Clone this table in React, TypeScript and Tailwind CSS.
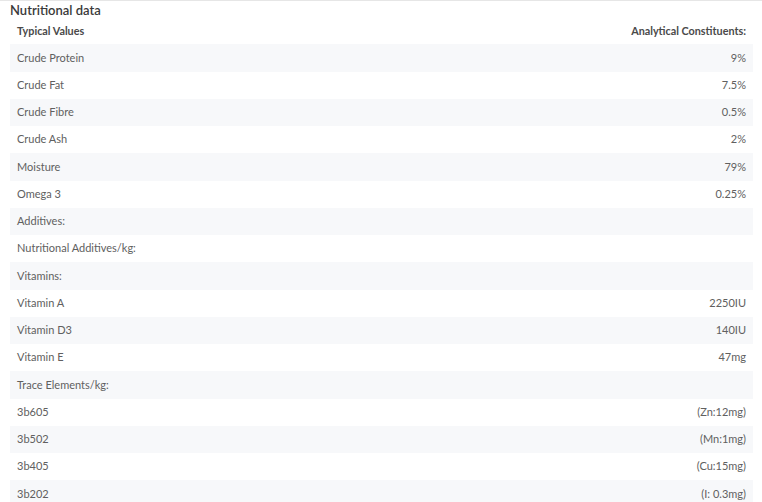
const rows: [string, string][] = [
  ['Crude Protein', '9%'],
  ['Crude Fat', '7.5%'],
  ['Crude Fibre', '0.5%'],
  ['Crude Ash', '2%'],
  ['Moisture', '79%'],
  ['Omega 3', '0.25%'],
  ['Additives:', ''],
  ['Nutritional Additives/kg:', ''],
  ['Vitamins:', ''],
  ['Vitamin A', '2250IU'],
  ['Vitamin D3', '140IU'],
  ['Vitamin E', '47mg'],
  ['Trace Elements/kg:', ''],
  ['3b605', '(Zn:12mg)'],
  ['3b502', '(Mn:1mg)'],
  ['3b405', '(Cu:15mg)'],
  ['3b202', '(I: 0.3mg)'],
];

export default function App() {
  return (
    <div className="w-[762px] h-[502px] overflow-hidden bg-white border-t border-[#e6e6e6] font-['Lato',sans-serif]">
      <div className="pl-[10px] pr-[9px]">
        <h2 className="h-[16px] leading-[18px] text-[13px] font-semibold text-[#3a3a3a]">Nutritional data</h2>
        <div className="flex items-center justify-between h-[27.25px] pt-[1px] px-[7px] text-[10.8px] font-bold text-[#4a4a4a]">
          <span>Typical Values</span>
          <span>Analytical Constituents:</span>
        </div>
        {rows.map(([label, value], i) => (
          <div
            key={label}
            className={`flex items-center justify-between h-[27.25px] px-[7px] text-[11px] text-[#606060] ${i % 2 === 0 ? 'bg-[#f7f8fa]' : 'bg-white'}`}
          >
            <span>{label}</span>
            <span>{value}</span>
          </div>
        ))}
      </div>
    </div>
  );
}
